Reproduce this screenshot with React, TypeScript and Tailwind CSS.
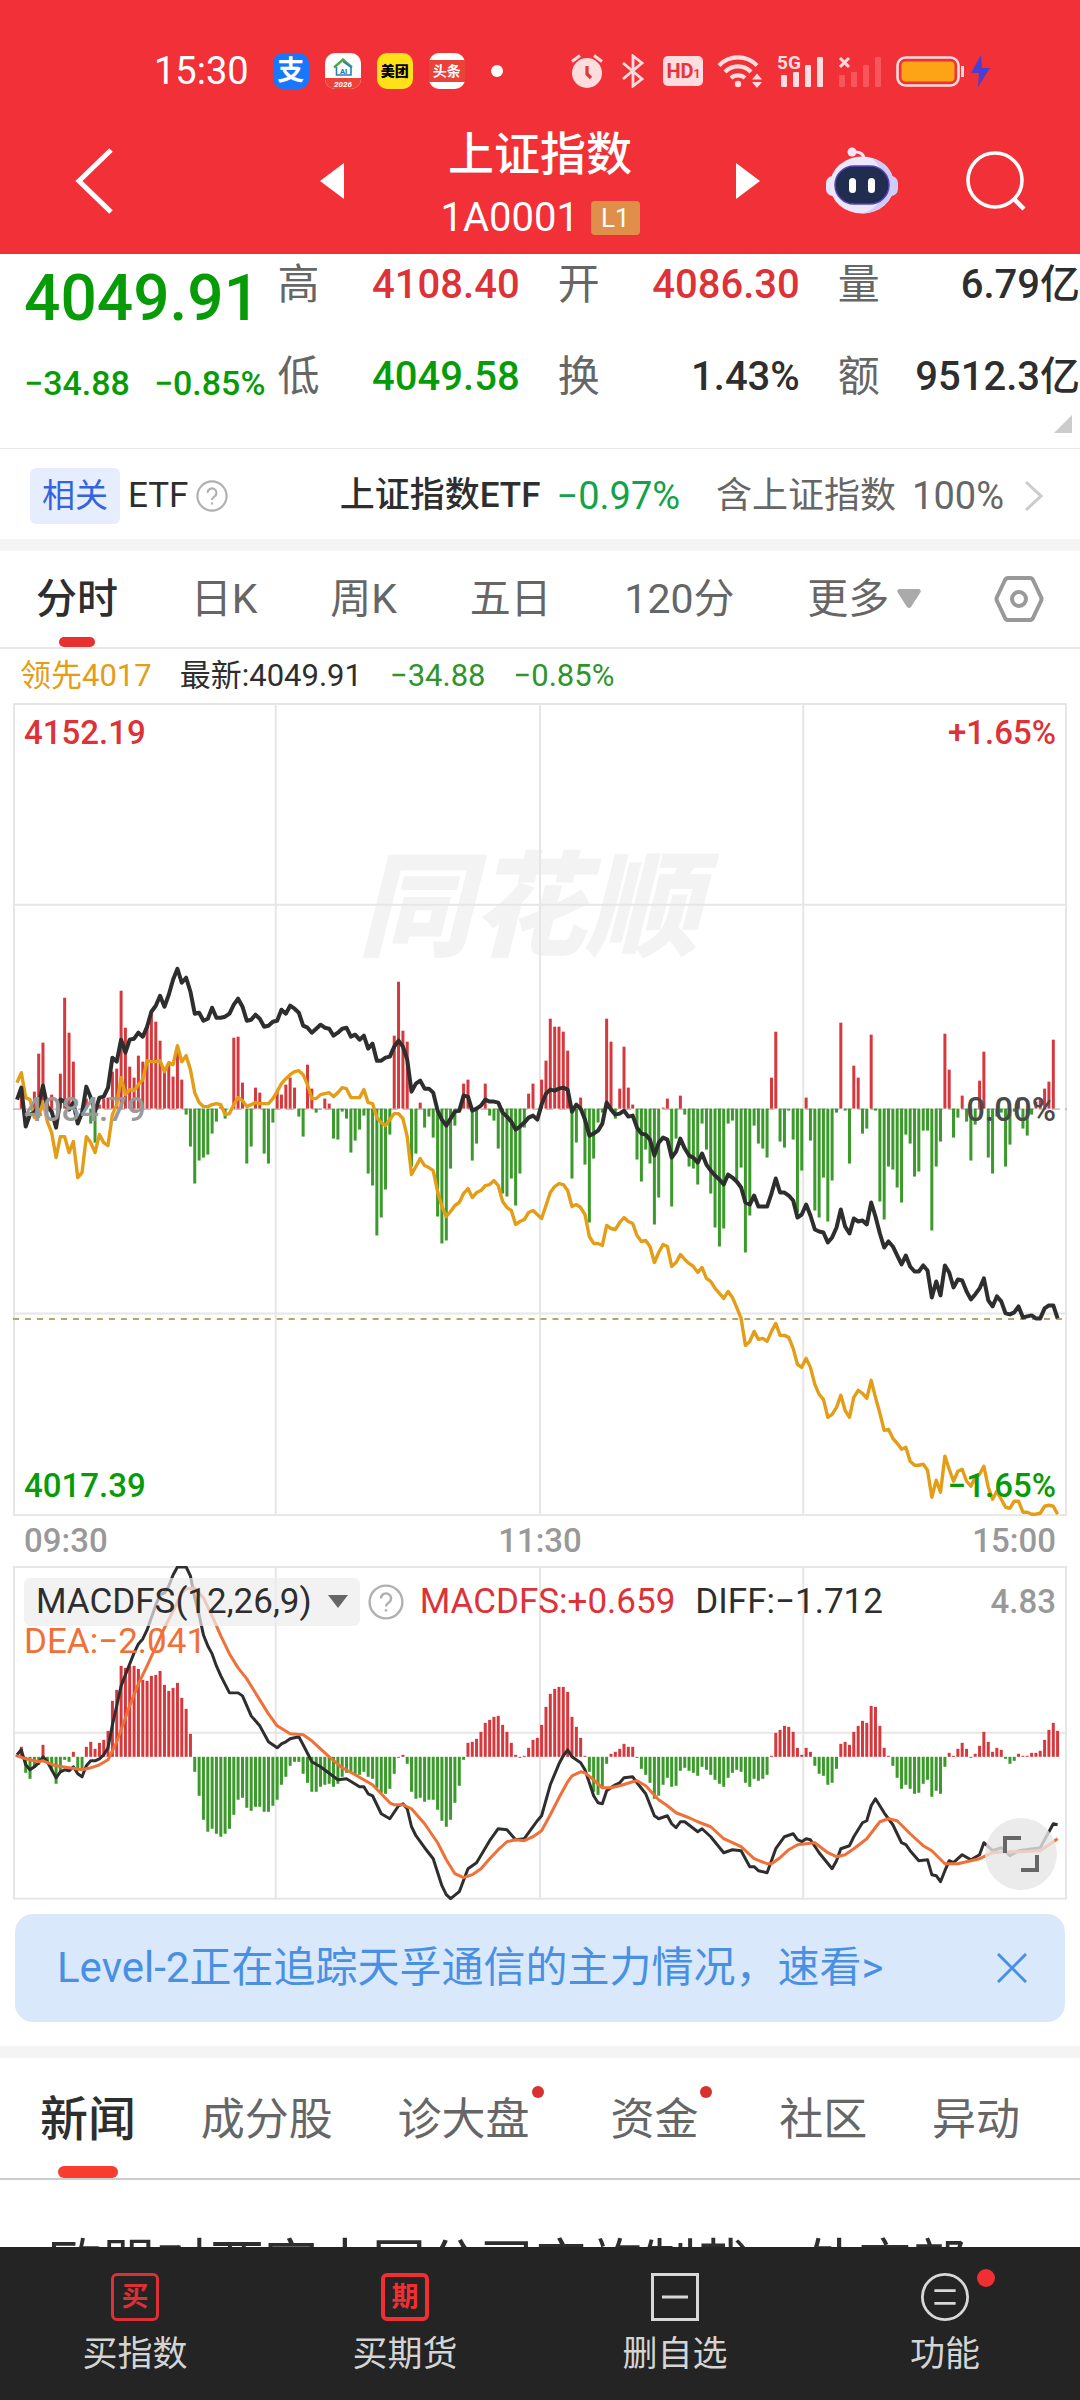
import { useState } from 'react'
import type { ReactNode } from 'react'
import clsx from 'clsx'

const STEP = 4.34
const FIRST = 4
const xOf = (i: number) => Math.round((FIRST + i * STEP) * 10) / 10

// One value per minute, measured from the zero line (up is positive)
const price = [
    9, 21, -18, -6, -4, 4, 23, 2, -3, -19, 9, 7, -1, 6, -15, -4, 22, 11, -3, 11, 12, 21, 51, 47, 69, 56, 69, 70, 76, 72,
    82, 97, 103, 113, 102, 114, 129, 140, 126, 131, 117, 95, 96, 88, 90, 101, 91, 91, 92, 95, 104, 110, 102, 88, 89, 94, 90, 82, 83, 87,
    88, 99, 95, 103, 100, 96, 83, 81, 76, 80, 84, 81, 80, 73, 76, 80, 81, 72, 74, 69, 73, 60, 65, 48, 48, 51, 52, 62, 68, 62,
    49, 17, 25, 28, 20, 20, 16, -2, -11, -17, -10, -3, -2, 13, 12, -2, 0, 3, 9, 7, 7, 6, -4, -8, -13, -21, -18, -14, -9, -7,
    -11, 4, 15, 19, 18, 20, 21, 19, -3, 4, 0, -11, -27, -25, -22, -15, 6, -1, -6, -5, -2, -8, -7, -19, -25, -26, -31, -47, -34, -29,
    -31, -49, -43, -30, -40, -47, -49, -54, -45, -56, -62, -67, -71, -76, -66, -69, -73, -79, -94, -96, -87, -98, -98, -98, -85, -70, -84, -84, -87, -92,
    -109, -106, -96, -107, -121, -123, -124, -134, -129, -119, -101, -118, -125, -110, -113, -112, -116, -94, -108, -125, -139, -133, -138, -147, -156, -147, -158, -163, -163, -157,
    -162, -189, -173, -187, -157, -164, -179, -171, -172, -183, -191, -186, -180, -170, -192, -198, -188, -193, -205, -206, -204, -198, -209, -208, -207, -210, -210, -200, -197, -197,
    -210,
]

const leading = [
    26, 36, 11, 9, -9, -8, 7, -13, -24, -49, -28, -28, -44, -33, -69, -64, -28, -34, -44, -26, -34, -37, -6, 4, 31, 14, 19, 18, 24, 29,
    48, 47, 47, 48, 37, 46, 44, 63, 47, 53, 39, 16, 6, 2, 2, 4, 5, 4, -6, -5, 4, 11, 8, 2, 4, 6, 5, 5, 5, 10,
    17, 25, 30, 34, 37, 38, 34, 24, 10, 10, 14, 15, 16, 12, 16, 21, 20, 11, 11, 11, 19, 6, 5, -9, -14, -17, -11, -5, -5, -10,
    -28, -66, -58, -50, -57, -59, -62, -83, -98, -108, -103, -97, -94, -85, -80, -89, -84, -82, -77, -76, -72, -77, -93, -99, -102, -116, -113, -111, -104, -102,
    -106, -110, -97, -84, -78, -75, -76, -82, -98, -96, -99, -106, -128, -135, -135, -137, -117, -120, -121, -114, -109, -113, -115, -127, -133, -132, -138, -154, -144, -136,
    -138, -158, -154, -146, -151, -155, -158, -164, -159, -170, -173, -180, -185, -190, -183, -189, -199, -210, -237, -233, -223, -231, -230, -233, -223, -215, -227, -227, -229, -240,
    -256, -259, -250, -259, -276, -286, -291, -309, -306, -299, -287, -302, -309, -289, -282, -285, -290, -272, -289, -305, -322, -321, -330, -335, -341, -339, -353, -357, -357, -356,
    -362, -389, -372, -384, -348, -361, -373, -363, -361, -373, -378, -369, -366, -358, -379, -391, -383, -391, -399, -400, -393, -393, -404, -404, -406, -406, -405, -398, -397, -398,
    -406,
]

const strength = [
    0, 14, 0, 0, 17, 55, 66, 0, 14, 0, 35, 111, 76, 47, 0, 0, 10, -15, -34, 4, 10, 11, 37, 40, 118, 81, 42, 31, 53, 47,
    82, 95, 87, 68, 41, 46, 32, 60, 29, -6, -38, -75, -52, -49, -46, -25, -13, 2, -10, 0, 71, 72, 26, -55, -38, 21, 16, -45, -55, -14,
    18, 14, 24, 31, 21, -8, -28, 44, 20, -4, -1, 10, 5, -30, -31, -3, -10, -44, -32, -21, -7, -65, -77, -127, -109, -81, -26, 73, 127, 78,
    67, -58, -45, 6, -19, -8, -29, -108, -135, -132, -60, -17, -4, 25, 29, -52, -35, 0, 25, -7, -12, -40, -85, -88, -70, -97, -65, -19, 15, 25,
    0, 29, 48, 90, 82, 82, 77, 58, -70, -34, 11, -56, -114, -50, -14, -4, 90, 67, -10, 20, 62, 21, 4, -51, -73, -41, -55, -116, -89, 1,
    10, -98, -30, 13, -6, -58, -60, -76, -15, -41, -85, -119, -138, -120, -15, -12, -71, -59, -144, -107, -17, -35, -40, -49, 31, 77, -33, -39, -2, -31,
    -104, -62, 11, -32, -102, -109, -69, -113, -72, -4, 86, -2, -55, 43, 31, -25, -20, 74, -2, -93, -111, -58, -61, -79, -94, -26, -35, -68, -63, -22,
    -22, -122, -58, -33, 75, 39, -29, -9, 13, -13, -52, -16, 28, 57, -49, -65, -8, -4, -58, -36, -3, 11, -20, -27, -6, 7, 10, 20, 27, 69,
    0,
]

const macd = [
    2, 10, -16, -22, -11, -8, 12, -5, -14, -27, -16, -3, -5, 5, -14, -14, 10, 15, 8, 14, 17, 26, 56, 67, 91, 89, 91, 91, 88, 77,
    76, 81, 82, 86, 72, 66, 69, 74, 59, 48, 23, -15, -39, -63, -75, -72, -77, -80, -77, -72, -58, -43, -41, -51, -54, -50, -50, -55, -55, -49,
    -43, -28, -20, -9, -5, -5, -17, -26, -35, -35, -30, -28, -27, -30, -27, -20, -16, -15, -17, -18, -15, -20, -22, -31, -36, -37, -32, -17, -1, 2,
    -7, -35, -42, -41, -45, -43, -43, -53, -64, -70, -63, -46, -29, -3, 14, 15, 18, 25, 34, 37, 40, 41, 32, 25, 14, 2, -1, 1, 9, 17,
    19, 32, 50, 63, 68, 70, 70, 65, 40, 30, 19, 1, -15, -35, -38, -32, -7, 3, 5, 8, 13, 10, 10, -1, -12, -18, -26, -42, -39, -28,
    -21, -30, -29, -14, -11, -14, -16, -19, -10, -13, -18, -23, -27, -30, -21, -16, -13, -15, -26, -30, -22, -24, -22, -18, 1, 24, 27, 31, 30, 25,
    9, 2, 9, 5, -9, -17, -19, -28, -26, -12, 13, 15, 12, 25, 31, 36, 34, 51, 50, 31, 9, 1, -9, -21, -32, -28, -32, -37, -36, -27,
    -23, -40, -34, -37, -10, 4, 1, 8, 14, 8, -1, 3, 11, 25, 15, 5, 9, 7, -2, -7, -4, 3, 1, 1, 4, 4, 6, 17, 27, 34,
    26,
]

// [minute, value] pairs for the smooth lines
const diff = [
    [0, 2], [1, 7], [2, -8], [3, -13], [4, -10], [5, -6], [6, 0], [7, -5], [8, -13], [9, -21], [10, -15], [11, -13], [12, -14], [13, -10],
    [14, -17], [15, -20], [16, -9], [17, -4], [18, -4], [19, -2], [20, 2], [21, 9], [22, 32], [23, 51], [24, 71], [25, 82], [27, 104],
    [28, 113], [29, 118], [30, 127], [32, 152], [33, 162], [34, 164], [35, 171], [36, 182], [37, 190], [39, 190], [40, 181], [41, 159],
    [42, 142], [43, 122], [44, 111], [45, 103], [46, 91], [47, 81], [49, 64], [51, 64], [52, 61], [54, 41], [56, 31], [58, 15], [60, 9],
    [61, 13], [62, 15], [63, 18], [65, 20], [66, 12], [68, -5], [70, -10], [74, -23], [76, -22], [79, -30], [80, -30], [81, -37], [82, -39],
    [84, -57], [86, -62], [88, -49], [89, -47], [90, -52], [91, -70], [92, -79], [94, -91], [96, -102], [98, -129], [99, -138], [100, -142],
    [102, -135], [104, -112], [106, -106], [109, -84], [111, -72], [113, -73], [115, -83], [117, -82], [119, -70], [120, -64], [121, -59],
    [123, -28], [125, -7], [126, 1], [127, 7], [128, 0], [130, -6], [131, -13], [132, -26], [133, -39], [134, -46], [135, -47], [136, -34],
    [138, -28], [139, -26], [140, -21], [142, -20], [143, -26], [145, -37], [147, -59], [148, -62], [150, -59], [151, -67], [152, -71],
    [153, -65], [154, -65], [157, -75], [158, -72], [160, -80], [163, -96], [165, -93], [167, -94], [169, -110], [170, -110], [171, -114],
    [173, -116], [174, -104], [175, -92], [177, -80], [179, -77], [180, -83], [181, -85], [182, -82], [183, -83], [185, -96], [188, -112],
    [189, -104], [190, -92], [192, -89], [193, -80], [195, -66], [196, -64], [197, -49], [198, -42], [200, -56], [202, -68], [204, -86],
    [205, -88], [206, -94], [208, -104], [210, -103], [211, -118], [212, -119], [213, -125], [214, -114], [215, -104], [216, -106],
    [218, -98], [220, -103], [222, -98], [223, -86], [225, -94], [227, -91], [229, -99], [231, -94], [236, -91], [237, -83], [239, -67], [240, -68],
]

const dea = [
    [0, 1], [2, -2], [5, -5], [6, -4], [9, -9], [12, -11], [15, -13], [17, -11], [19, -8], [21, -3], [22, 6], [23, 15], [24, 27], [26, 51],
    [28, 73], [30, 91], [32, 110], [34, 129], [36, 146], [38, 164], [39, 168], [41, 169], [43, 159], [45, 141], [47, 121], [49, 103],
    [51, 89], [53, 78], [56, 57], [58, 43], [60, 31], [63, 23], [66, 22], [68, 16], [72, 0], [75, -11], [78, -18], [82, -28], [84, -37],
    [86, -46], [87, -48], [89, -48], [91, -52], [94, -67], [97, -86], [99, -103], [101, -117], [103, -121], [105, -118], [107, -112],
    [109, -102], [111, -93], [113, -85], [115, -83], [117, -84], [119, -80], [120, -77], [121, -74], [123, -58], [125, -41], [127, -25],
    [128, -19], [130, -15], [131, -16], [133, -23], [135, -31], [137, -31], [139, -29], [142, -25], [143, -24], [145, -29], [148, -43],
    [150, -49], [152, -56], [155, -61], [157, -65], [160, -70], [163, -82], [167, -90], [170, -102], [173, -107], [174, -107], [176, -101],
    [178, -93], [180, -88], [184, -86], [187, -96], [189, -100], [191, -98], [193, -92], [196, -82], [199, -65], [201, -62], [203, -64],
    [206, -77], [209, -89], [211, -94], [214, -107], [217, -107], [220, -104], [222, -102], [225, -96], [228, -95], [232, -95], [236, -94],
    [238, -88], [240, -82],
]

const quotes = [
    { label: '高', value: '4108.40', color: 'text-[#dc3238]' },
    { label: '开', value: '4086.30', color: 'text-[#dc3238]' },
    { label: '量', value: '6.79亿', color: 'text-[#2e2e2e]' },
    { label: '低', value: '4049.58', color: 'text-[#079b07]' },
    { label: '换', value: '1.43%', color: 'text-[#2e2e2e]' },
    { label: '额', value: '9512.3亿', color: 'text-[#2e2e2e]' },
]

const periods = ['分时', '日K', '周K', '五日', '120分']

const newsTabs = [
    { name: '新闻' },
    { name: '成分股' },
    { name: '诊大盘', dot: true },
    { name: '资金', dot: true },
    { name: '社区' },
    { name: '异动' },
]

const points = (pairs: number[][], zero: number) => pairs.map(([i, v]) => `${xOf(i)},${zero - v}`).join(' ')
const series = (values: number[], zero: number) => points(values.map((v, i) => [i, v]), zero)

function Bars({ values, zero }: { values: number[]; zero: number }) {
    return (
        <g>
            {values.map((v, i) =>
                v === 0 ? null : (
                    <rect
                        key={i}
                        x={xOf(i) - 1.5}
                        y={v > 0 ? zero - v : zero}
                        width="3"
                        height={Math.abs(v)}
                        fill={v > 0 ? '#d5393d' : '#3b9a2b'}
                    />
                )
            )}
        </g>
    )
}

function Help({ size }: { size: number }) {
    return (
        <svg width={size} height={size} viewBox="0 0 36 36" fill="none" stroke="#b0b0b0" strokeWidth="2.4" className="shrink-0">
            <circle cx="18" cy="18" r="16.4" />
            <path d="M13 14.5a5 5 0 1 1 7.6 4.2c-1.8 1.1-2.6 2-2.6 3.8" />
            <path d="M18 25.2v2.4" />
        </svg>
    )
}

function StatusBar() {
    return (
        <div className="flex items-center justify-between pt-11 pl-[154px] pr-[88px] leading-[54px]">
            <div className="flex items-center gap-4">
                <span className="mr-2 text-[38px]">15:30</span>
                <span className="flex size-9 items-center justify-center rounded-[10px] bg-[#1777ff] text-[27px] font-bold">支</span>
                <svg width="36" height="36" viewBox="0 0 36 36">
                    <rect width="36" height="36" rx="10" fill="#fff" />
                    <path d="M0 25h36v1a10 10 0 0 1-10 10H10A10 10 0 0 1 0 26z" fill="#ee4238" />
                    <path d="M9 14.5 18 6.5l9 8" fill="none" stroke="#4fa54c" strokeWidth="2.4" />
                    <path d="M11.5 14v8h14.5v-8L18 8.5" fill="none" stroke="#2584b5" strokeWidth="1.6" />
                    <text x="18.5" y="21" fontSize="7.5" fontWeight="700" textAnchor="middle" fill="#2371ad">AI</text>
                    <text x="18" y="33.5" fontSize="8" fontStyle="italic" fontWeight="700" textAnchor="middle" fill="#fff">2026</text>
                </svg>
                <span className="flex size-9 items-center justify-center rounded-[10px] bg-[#ffe11a] text-[14px] font-black text-black">美团</span>
                <span className="flex size-9 flex-col justify-center rounded-[10px] bg-white">
                    <span className="bg-[#ea4138] text-center text-[14px] leading-[22px] font-bold">头条</span>
                </span>
                <span className="ml-2.5 size-3 rounded-full bg-white" />
            </div>
            <div className="flex items-center gap-3.5">
                <svg width="32" height="36" viewBox="0 0 32 36" fill="#ffdcdd" className="mr-1">
                    <circle cx="16" cy="20" r="15" />
                    <path d="M1 8.500 9 2.500M31 8.500 23 2.500" stroke="#ffdcdd" strokeWidth="3" />
                    <path d="M16 13v8l4 4" fill="none" stroke="#e8343b" strokeWidth="3.2" />
                </svg>
                <svg width="24" height="34" viewBox="0 0 24 34" fill="none" stroke="#ffdcdd" strokeWidth="2.8" className="mr-1">
                    <path d="M2 9l19 16-9 7V2l9 7L2 25" />
                </svg>
                <svg width="40" height="30" viewBox="0 0 40 30">
                    <rect width="40" height="30" rx="5" fill="#ffdcdd" />
                    <text x="17" y="22" fontSize="20" fontWeight="700" textAnchor="middle" fill="#e8343b">HD</text>
                    <text x="34" y="22" fontSize="12" fontWeight="700" textAnchor="middle" fill="#e8343b">1</text>
                </svg>
                <svg width="46" height="34" viewBox="0 0 46 34" fill="none" stroke="#ffdcdd" strokeWidth="4.2">
                    <path d="M2 11.5a26.5 26.5 0 0 1 38 0" />
                    <path d="M8 18a18 18 0 0 1 26 0" />
                    <path d="M14 24a10.5 10.5 0 0 1 14 0" />
                    <circle cx="21" cy="30" r="3.2" fill="#ffdcdd" stroke="none" />
                    <path d="M40 19.5l5 6H35zM40 34l5-6H35z" fill="#ffdcdd" stroke="none" />
                </svg>
                <svg width="47" height="34" viewBox="0 0 47 34" fill="#ffdcdd" overflow="visible">
                    <text x="0" y="15" fontSize="19" fontWeight="700">5G</text>
                    <rect x="4" y="21" width="6" height="12" rx="1" />
                    <rect x="16" y="18" width="6" height="15" rx="1" />
                    <rect x="28" y="11" width="6" height="22" rx="1" />
                    <rect x="40" y="3" width="6" height="30" rx="1" />
                </svg>
                <svg width="44" height="34" viewBox="0 0 44 34" fill="#f7565c">
                    <path d="M2 4l9 9M11 4l-9 9" stroke="#ffdcdd" strokeWidth="3" />
                    <rect x="1" y="21" width="6" height="12" rx="1" />
                    <rect x="13" y="18" width="6" height="15" rx="1" />
                    <rect x="25" y="11" width="6" height="22" rx="1" />
                    <rect x="37" y="3" width="6" height="30" rx="1" />
                </svg>
                <svg width="96" height="34" viewBox="0 0 96 34">
                    <rect x="1.5" y="3.5" width="61" height="28" rx="8" fill="none" stroke="#ffdcdd" strokeWidth="2.6" />
                    <rect x="5.5" y="7.5" width="53" height="20" rx="4" fill="#fda316" />
                    <path d="M66.5 12v11" stroke="#ffdcdd" strokeWidth="3" />
                    <path d="M85 1 75 19h8l-1 14 12-19h-8z" fill="#4a3fd0" />
                </svg>
            </div>
        </div>
    )
}

function Robot() {
    return (
        <svg width="72" height="68" viewBox="0 0 72 68">
            <path d="M38 12c0-5-3-7-9-7" fill="none" stroke="#f3e6f6" strokeWidth="3" />
            <circle cx="26" cy="5" r="4.5" fill="#f3e6f6" />
            <rect x="0" y="29" width="14" height="20" rx="7" fill="#e6e3fb" />
            <rect x="58" y="29" width="14" height="20" rx="7" fill="#c9cdfa" />
            <ellipse cx="36" cy="38" rx="32" ry="28.5" fill="#ece7fa" />
            <path d="M44 10.500c15 3 24 14 24 27.500S55 66.500 36 66.500c14-4 22-14 22-28S52 15 44 10.500" fill="#d0ccf8" />
            <rect x="9" y="19" width="54" height="38" rx="19" fill="#202c50" stroke="#5a43b5" strokeWidth="1.5" />
            <rect x="23" y="31" width="7" height="15" rx="3.5" fill="#fff" />
            <rect x="42" y="31" width="7" height="15" rx="3.5" fill="#fff" />
        </svg>
    )
}

function TitleBar() {
    return (
        <div className="grid grid-cols-[1fr_auto_1fr] items-center pt-[26px] pb-4">
            <button aria-label="返回" className="justify-self-start pl-[74px]">
                <svg width="40" height="66" viewBox="0 0 40 66" fill="none" stroke="#fff" strokeWidth="5">
                    <path d="M37 2 5 33l32 31" />
                </svg>
            </button>
            <div className="flex items-center gap-[96px]">
                <button aria-label="上一个">
                    <svg width="24" height="36" viewBox="0 0 24 36" fill="#fff"><path d="M24 0v36L0 18z" /></svg>
                </button>
                <div className="text-center">
                    <h1 className="text-[46px] leading-[60px] font-medium">上证指数</h1>
                    <div className="mt-3.5 flex items-center justify-center gap-3 leading-10">
                        <span className="text-[40px]">1A0001</span>
                        <span className="rounded-[4px] bg-[#e08f4a] px-2.5 text-[26px] leading-[34px]">L1</span>
                    </div>
                </div>
                <button aria-label="下一个">
                    <svg width="24" height="36" viewBox="0 0 24 36" fill="#fff"><path d="M0 0v36l24-18z" /></svg>
                </button>
            </div>
            <div className="flex items-center justify-end gap-[68px] pr-[54px]">
                <button aria-label="助手"><Robot /></button>
                <button aria-label="搜索">
                    <svg width="60" height="60" viewBox="0 0 60 60" fill="none" stroke="#fff" strokeWidth="3.6">
                        <circle cx="29" cy="29" r="27" />
                        <path d="M48 48l10 10" strokeWidth="4.5" />
                    </svg>
                </button>
            </div>
        </div>
    )
}

function Quotes() {
    return (
        <section className="flex border-b border-[#e8e8e8] pt-[3px] pb-[43px]">
            <div className="shrink-0 pt-1.5 pl-6 text-[#079b07]">
                <p className="text-[64px] leading-[72px] font-medium">4049.91</p>
                <p className="mt-[26px] flex gap-6 text-[34px] leading-11 font-medium">
                    <span>−34.88</span>
                    <span>−0.85%</span>
                </p>
            </div>
            <div className="relative flex-1 pl-3">
                <dl className="grid grid-cols-3 gap-x-[38px] gap-y-9">
                    {quotes.map((q) => (
                        <div key={q.label} className="flex justify-between leading-14">
                            <dt className="text-[42px] text-[#666]">{q.label}</dt>
                            <dd className={clsx('text-[40px] font-medium whitespace-nowrap', q.color)}>{q.value}</dd>
                        </div>
                    ))}
                </dl>
                <svg width="18" height="18" viewBox="0 0 18 18" className="absolute right-2 -bottom-7"><path d="M18 0v18H0z" fill="#ccc" /></svg>
            </div>
        </section>
    )
}

function EtfRow() {
    return (
        <a href="#etf" className="flex items-center justify-between border-b-12 border-[#f4f4f4] pt-[18px] pb-[14px] pl-[30px] pr-9 text-[36px] leading-[58px]">
            <span className="flex items-center gap-2">
                <span className="rounded-md bg-[#e6edfd] px-3 text-[33px] leading-14 text-[#3563e0]">相关</span>
                <span className="text-[35px] text-[#2e2e2e]">ETF</span>
                <Help size={32} />
            </span>
            <span className="flex items-center">
                <span className="text-[35px] font-medium text-[#2e2e2e]">上证指数ETF</span>
                <span className="ml-4 text-[38px] text-[#12a34a]">−0.97%</span>
                <span className="ml-9 text-[#666]">含上证指数</span>
                <span className="ml-4 text-[38px] text-[#666]">100%</span>
                <svg width="20" height="32" viewBox="0 0 20 32" fill="none" stroke="#ccc" strokeWidth="3" className="ml-5">
                    <path d="M2 2l15 14L2 30" />
                </svg>
            </span>
        </a>
    )
}

function Periods() {
    const [active, setActive] = useState('分时')
    return (
        <nav className="flex items-center justify-between border-b-2 border-[#e8e8e8] px-9 text-[41px] leading-[96px] text-[#666]">
            {periods.map((p) => (
                <button
                    key={p}
                    onClick={() => setActive(p)}
                    className={clsx('relative', p === active && 'font-medium text-[#2e2e2e]')}
                >
                    {p}
                    {p === active && <span className="absolute bottom-0 left-1/2 h-2.5 w-9 -translate-x-1/2 rounded-full bg-[#e93030]" />}
                </button>
            ))}
            <button className="flex items-center gap-2">
                更多
                <svg width="24" height="20" viewBox="0 0 24 20"><path d="M2 0h20q3 1 1 4L14 18q-2 2-4 0L1 4Q-1 1 2 0" fill="#aaa" /></svg>
            </button>
            <button aria-label="设置">
                <svg width="50" height="48" viewBox="0 0 50 48" fill="none" stroke="#999" strokeWidth="4">
                    <path d="M14 3h22q2 0 3 2l8 17q1 2 0 4l-8 17q-1 2-3 2H14q-2 0-3-2L3 26q-1-2 0-4l8-17q1-2 3-2z" />
                    <circle cx="25" cy="24" r="7" />
                </svg>
            </button>
        </nav>
    )
}

function Grid({ height, rows }: { height: number; rows: number[] }) {
    return (
        <g stroke="#e6e6e6" strokeWidth="2" fill="none">
            <rect x="1" y="1" width="1053" height={height - 2} />
            <path d={`M263 0V${height}M527.5 0V${height}M791 0V${height}`} />
            {rows.map((y) => <path key={y} d={`M0 ${y}H1055`} />)}
        </g>
    )
}

function PriceChart() {
    return (
        <div className="relative text-[33px] leading-9">
            <svg viewBox="0 0 1055 814" className="block w-full">
                <text x="516" y="244" fontSize="114" fontWeight="900" fontStyle="italic" textAnchor="middle" fill="#f3f3f3">同花顺</text>
                <Grid height={814} rows={[202, 611]} />
                <path d="M0 406.5H1055" stroke="#999" strokeDasharray="8 5" />
                <path d="M0 616.5H1055" stroke="#b8a36a" strokeWidth="2" strokeDasharray="6 6" />
                <Bars values={strength} zero={406} />
                <polyline points={series(leading, 406)} fill="none" stroke="#e49d16" strokeWidth="3.4" strokeLinejoin="round" />
                <polyline points={series(price, 406)} fill="none" stroke="#2e2e2e" strokeWidth="4" strokeLinejoin="round" />
            </svg>
            <div className="absolute inset-0 flex flex-col justify-between px-[11px] py-3 font-medium">
                <p className="flex justify-between text-[#dc3238]"><span>4152.19</span><span>+1.65%</span></p>
                <p className="flex justify-between text-[#999]"><span>4084.79</span><span className="text-[#4a4a4a]">0.00%</span></p>
                <p className="flex justify-between text-[#079b07]"><span>4017.39</span><span>−1.65%</span></p>
            </div>
        </div>
    )
}

function MacdChart() {
    return (
        <div className="relative text-[35px] leading-10">
            <svg viewBox="0 0 1055 334" className="block w-full">
                <Grid height={334} rows={[167]} />
                <Bars values={macd} zero={191} />
                <polyline points={points(diff, 191)} fill="none" stroke="#2e2e2e" strokeWidth="3" strokeLinejoin="round" />
                <polyline points={points(dea, 191)} fill="none" stroke="#f07038" strokeWidth="3" strokeLinejoin="round" />
            </svg>
            <div className="absolute inset-x-0 top-0 px-[11px] pt-3">
                <div className="flex items-center">
                    <button className="flex items-center gap-4 rounded-md bg-[#ececec]/70 px-3 leading-12 text-[#2e2e2e]">
                        MACDFS(12,26,9)
                        <svg width="20" height="14" viewBox="0 0 20 14"><path d="M0 0h20L10 13z" fill="#666" /></svg>
                    </button>
                    <button aria-label="指标说明" className="ml-2"><Help size={36} /></button>
                    <span className="ml-4 text-[#dc3238]">MACDFS:+0.659</span>
                    <span className="ml-5 text-[#2e2e2e]">DIFF:−1.712</span>
                    <span className="ml-auto text-[33px] font-medium text-[#999]">4.83</span>
                </div>
                <p className="leading-8 text-[#f07038]">DEA:−2.041</p>
            </div>
            <button aria-label="全屏" className="absolute right-2.5 bottom-2.5 flex size-[72px] items-center justify-center rounded-full bg-[#e6e6e6]/80">
                <svg width="38" height="38" viewBox="0 0 38 38" fill="none" stroke="#666" strokeWidth="4">
                    <path d="M3 18V3h16M35 20v15H19" />
                </svg>
            </button>
        </div>
    )
}

function Banner() {
    const [open, setOpen] = useState(true)
    if (!open) return null
    return (
        <div className="mx-[15px] mt-3.5 flex items-center justify-between rounded-[18px] bg-[#dae8fb] pl-[42px] pr-[38px] text-[42px] leading-[108px] text-[#4a90e2]">
            <a href="#level2">Level-2正在追踪天孚通信的主力情况，速看&gt;</a>
            <button aria-label="关闭" onClick={() => setOpen(false)}>
                <svg width="30" height="30" viewBox="0 0 30 30" fill="none" stroke="#4a90e2" strokeWidth="3"><path d="M1 1l28 28M29 1 1 29" /></svg>
            </button>
        </div>
    )
}

function NewsTabs() {
    const [active, setActive] = useState('新闻')
    return (
        <nav className="mt-6 flex items-center justify-between border-t-12 border-b-2 border-t-[#f4f4f4] border-b-[#ccc] pl-10 pr-[60px] text-[44px] leading-[116px] text-[#666]">
            {newsTabs.map((t) => (
                <button
                    key={t.name}
                    onClick={() => setActive(t.name)}
                    className={clsx('relative pt-1', t.dot && 'pr-4', t.name === active && 'text-[48px] font-medium text-[#2e2e2e]')}
                >
                    {t.name}
                    {t.dot && <span className="absolute top-7 right-0.5 size-3 rounded-full bg-[#d93030]" />}
                    {t.name === active && <span className="absolute bottom-0 left-1/2 h-3 w-15 -translate-x-1/2 rounded-full bg-[#f83c2f]" />}
                </button>
            ))}
        </nav>
    )
}

function NavItem({ label, dot, children }: { label: string; dot?: boolean; children: ReactNode }) {
    return (
        <button className="flex flex-1 flex-col items-center gap-3 text-[35px] leading-11">
            <span className="relative">
                {children}
                {dot && <span className="absolute -top-1 -right-6 size-[18px] rounded-full bg-[#f02f33]" />}
            </span>
            {label}
        </button>
    )
}

export default function App() {
    return (
        <div className="flex h-screen flex-col overflow-hidden bg-white font-['Roboto','Noto_Sans_CJK_SC',sans-serif]">
            <header className="shrink-0 bg-[#f13037] text-white">
                <StatusBar />
                <TitleBar />
            </header>

            <main className="min-h-0 flex-1 overflow-hidden">
                <Quotes />
                <EtfRow />
                <Periods />

                {/* Charts */}
                <p className="flex gap-7 pl-5 text-[31px] leading-[54px] text-[#2f952a]">
                    <span className="text-[#e49d16]">领先4017</span>
                    <span className="text-[#2e2e2e]">最新:4049.91</span>
                    <span>−34.88</span>
                    <span>−0.85%</span>
                </p>
                <div className="px-[13px]">
                    <PriceChart />
                    <p className="flex justify-between px-[11px] text-[33px] leading-[50px] font-medium text-[#999]">
                        <span>09:30</span>
                        <span>11:30</span>
                        <span>15:00</span>
                    </p>
                    <MacdChart />
                </div>

                <Banner />
                <NewsTabs />
                <h2 className="px-12 pt-12 text-[54px] leading-[76px] whitespace-nowrap text-[#2e2e2e]">欧盟对两家中国公司实施制裁，外交部</h2>
            </main>

            <footer className="flex shrink-0 bg-[#242424] pt-[26px] pb-[23px] text-[#d4d4d4]">
                <NavItem label="买指数">
                    <span className="flex size-12 items-center justify-center rounded-md border-3 border-[#dc2f36] text-[27px] leading-none font-bold text-[#dc2f36]">买</span>
                </NavItem>
                <NavItem label="买期货">
                    <span className="flex size-12 items-center justify-center rounded-md border-4 border-[#f02f33] text-[27px] leading-none font-bold text-[#f02f33]">期</span>
                </NavItem>
                <NavItem label="删自选">
                    <svg width="48" height="48" viewBox="0 0 48 48" fill="none" stroke="#d8d8d8" strokeWidth="3">
                        <rect x="1.5" y="1.5" width="45" height="45" />
                        <path d="M11 24h26" />
                    </svg>
                </NavItem>
                <NavItem label="功能" dot>
                    <svg width="52" height="48" viewBox="0 0 52 52" fill="none" stroke="#d8d8d8" strokeWidth="3">
                        <circle cx="26" cy="26" r="24.5" />
                        <path d="M14.5 19h23M14.5 33h23" />
                    </svg>
                </NavItem>
            </footer>
        </div>
    )
}
